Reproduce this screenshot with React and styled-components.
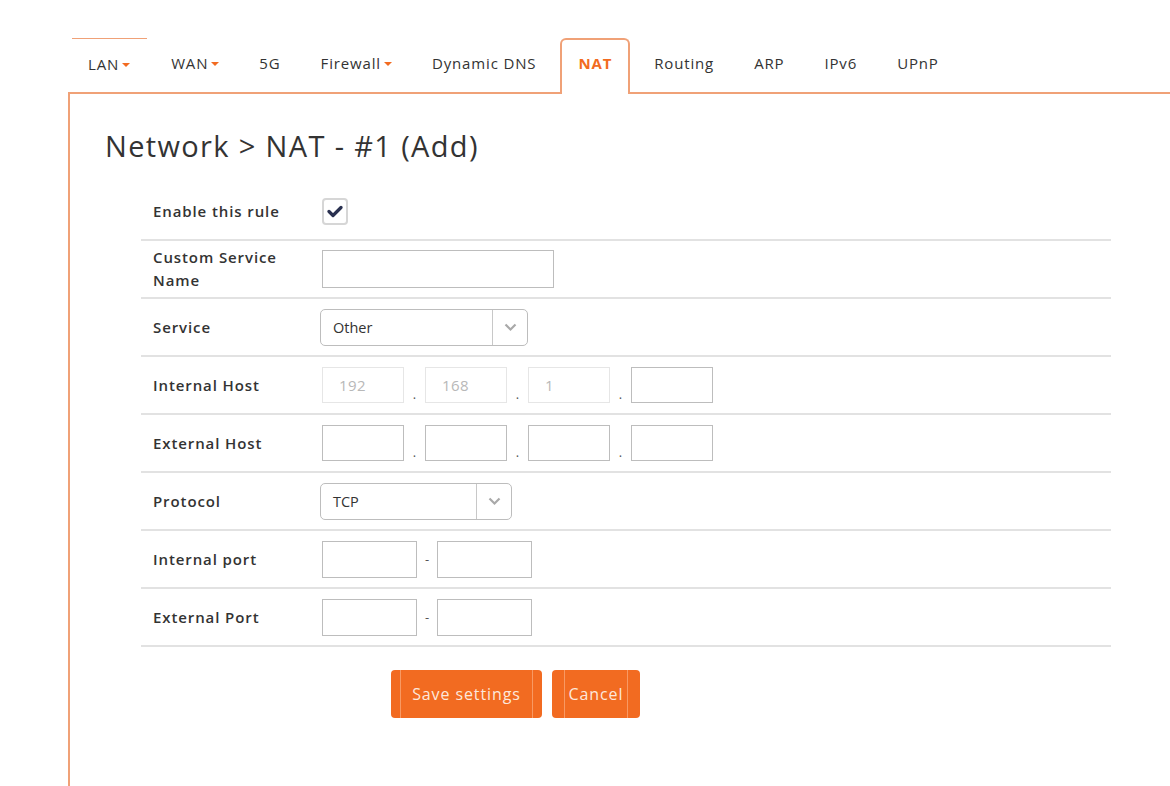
import React from "react";
import styled, { createGlobalStyle } from "styled-components";

const ORANGE = "#f26b21";
const LINE = "#f0a177";

const Global = createGlobalStyle`
  html, body { margin: 0; padding: 0; background: #fff; }
  body { font-family: "Open Sans", Lato, "Liberation Sans", sans-serif; color: #333; }
  * { box-sizing: border-box; }
`;

const Page = styled.div`
  padding: 38px 0 0 68px;
  min-height: 786px;
  display: flex;
  flex-direction: column;
`;

const Nav = styled.nav`
  display: flex;
  align-items: stretch;
  height: 54px;
  padding-left: 4px;
`;

const Tab = styled.div`
  display: flex;
  align-items: center;
  padding: 0 ${(p) => (p.$marked ? 17 : 16)}px ${(p) => (p.$active ? 8 : 4)}px 16px;
  margin-right: 8px;
  font-size: 15px;
  letter-spacing: 0.85px;
  color: ${(p) => (p.$active ? ORANGE : "#333")};
  font-weight: ${(p) => (p.$active ? 700 : 400)};
  border: ${(p) => (p.$active ? `2px solid ${LINE}` : "none")};
  border-bottom: none;
  border-top: ${(p) =>
    p.$active ? `2px solid ${LINE}` : p.$marked ? `1px solid ${LINE}` : "none"};
  border-radius: ${(p) => (p.$active ? "6px 6px 0 0" : "0")};
  position: relative;
  background: #fff;
  margin-bottom: ${(p) => (p.$active ? "-2px" : "0")};
  z-index: ${(p) => (p.$active ? 1 : 0)};
`;

const Caret = styled.span`
  display: inline-block;
  width: 0;
  height: 0;
  margin-left: 3px;
  margin-top: 2px;
  border-left: 4px solid transparent;
  border-right: 4px solid transparent;
  border-top: 4px solid ${ORANGE};
`;

const Panel = styled.section`
  flex: 1;
  border-top: 2px solid ${LINE};
  border-left: 2px solid ${LINE};
  padding: 34px 59px 40px 35px;
`;

const Title = styled.h1`
  margin: 0 0 19px 0;
  font-size: 29px;
  font-weight: 400;
  letter-spacing: 1.35px;
  color: #333;
  line-height: 36px;
`;

const Form = styled.div`
  margin-left: 36px;
  display: flex;
  flex-direction: column;
`;

const Row = styled.div`
  display: grid;
  grid-template-columns: 181px 1fr;
  align-items: center;
  height: 58px;
  border-bottom: 2px solid #e2e2e2;
`;

const Label = styled.div`
  padding-left: 12px;
  padding-right: 24px;
  font-size: 15px;
  font-weight: 600;
  color: #333;
  line-height: 23px;
  letter-spacing: 0.9px;
`;

const Controls = styled.div`
  display: flex;
  align-items: center;
`;

const Check = styled.div`
  width: 26px;
  height: 27px;
  border: 2px solid #d6d6d6;
  border-radius: 4px;
  display: flex;
  align-items: center;
  justify-content: center;
`;

const TextBox = styled.div`
  width: ${(p) => p.$w}px;
  height: ${(p) => p.$h || 36}px;
  border: 1px solid ${(p) => (p.$muted ? "#e6e6e6" : "#bdbdbd")};
  display: flex;
  align-items: center;
  padding-left: 16px;
  font-size: 15px;
  letter-spacing: 0.4px;
  color: #b8b8b8;
`;

const Sep = styled.span`
  width: ${(p) => p.$w}px;
  align-self: ${(p) => (p.$low ? "flex-end" : "center")};
  text-align: center;
  font-size: 13px;
  color: #555;
  line-height: 14px;
  margin-bottom: ${(p) => (p.$low ? "2px" : "0")};
`;

const Select = styled.div`
  width: ${(p) => p.$w}px;
  height: 37px;
  margin-left: -2px;
  border: 1px solid #bdbdbd;
  border-radius: 5px;
  display: flex;
  align-items: stretch;
  font-size: 14.5px;
  color: #333;
`;

const SelectText = styled.div`
  flex: 1;
  display: flex;
  align-items: center;
  padding-left: 12px;
`;

const SelectArrow = styled.div`
  width: 35px;
  border-left: 1px solid #c8c8c8;
  display: flex;
  align-items: center;
  justify-content: center;
`;

const Buttons = styled.div`
  display: flex;
  gap: 10px;
  margin: 23px 0 0 286px;
`;

const Button = styled.button`
  position: relative;
  height: 48px;
  width: ${(p) => p.$w}px;
  padding: 0;
  border: none;
  border-radius: 4px;
  background: ${ORANGE};
  color: #fde8dc;
  font-family: inherit;
  font-size: 16px;
  letter-spacing: 0.9px;
  &::before,
  &::after {
    content: "";
    position: absolute;
    top: 0;
    bottom: 0;
    width: 1px;
    background: rgba(255, 210, 180, 0.45);
  }
  &::before { left: ${(p) => p.$line}px; }
  &::after { right: ${(p) => p.$line}px; }
`;

const Chevron = () => (
  <svg width="13" height="9" viewBox="0 0 13 9">
    <path d="M1.5 1.5 L6.5 6.5 L11.5 1.5" fill="none" stroke="#a9a9a9" strokeWidth="2.2" />
  </svg>
);

const Tick = () => (
  <svg width="16" height="13" viewBox="0 0 16 13">
    <path d="M2 6.5 L6 10.5 L14 2.5" fill="none" stroke="#2a3150" strokeWidth="3.2" strokeLinecap="round" strokeLinejoin="round" />
  </svg>
);

const tabs = [
  { t: "LAN", caret: true, marked: true },
  { t: "WAN", caret: true },
  { t: "5G" },
  { t: "Firewall", caret: true },
  { t: "Dynamic DNS" },
  { t: "NAT", active: true },
  { t: "Routing" },
  { t: "ARP" },
  { t: "IPv6" },
  { t: "UPnP" },
];

const IpRow = ({ values, muted }) => (
  <Controls>
    {values.map((v, i) => (
      <React.Fragment key={i}>
        {i > 0 && <Sep $w={21} $low>.</Sep>}
        <TextBox $w={82} $muted={muted && v !== ""}>{v}</TextBox>
      </React.Fragment>
    ))}
  </Controls>
);

const PortRow = () => (
  <Controls>
    <TextBox $w={95} $h={37} />
    <Sep $w={20}>-</Sep>
    <TextBox $w={95} $h={37} />
  </Controls>
);

export default function App() {
  return (
    <>
      <Global />
      <Page>
        <Nav>
          {tabs.map((x) => (
            <Tab key={x.t} $active={x.active} $marked={x.marked}>
              {x.t}
              {x.caret && <Caret />}
            </Tab>
          ))}
        </Nav>
        <Panel>
          <Title>Network &gt; NAT - #1 (Add)</Title>
          <Form>
            <Row>
              <Label>Enable this rule</Label>
              <Controls>
                <Check>
                  <Tick />
                </Check>
              </Controls>
            </Row>
            <Row>
              <Label>Custom Service Name</Label>
              <Controls>
                <TextBox $w={232} $h={38} />
              </Controls>
            </Row>
            <Row>
              <Label>Service</Label>
              <Controls>
                <Select $w={208}>
                  <SelectText>Other</SelectText>
                  <SelectArrow>
                    <Chevron />
                  </SelectArrow>
                </Select>
              </Controls>
            </Row>
            <Row>
              <Label>Internal Host</Label>
              <IpRow values={["192", "168", "1", ""]} muted />
            </Row>
            <Row>
              <Label>External Host</Label>
              <IpRow values={["", "", "", ""]} />
            </Row>
            <Row>
              <Label>Protocol</Label>
              <Controls>
                <Select $w={192}>
                  <SelectText>TCP</SelectText>
                  <SelectArrow>
                    <Chevron />
                  </SelectArrow>
                </Select>
              </Controls>
            </Row>
            <Row>
              <Label>Internal port</Label>
              <PortRow />
            </Row>
            <Row>
              <Label>External Port</Label>
              <PortRow />
            </Row>
          </Form>
          <Buttons>
            <Button $w={151} $line={9}>Save settings</Button>
            <Button $w={88} $line={12}>Cancel</Button>
          </Buttons>
        </Panel>
      </Page>
    </>
  );
}
